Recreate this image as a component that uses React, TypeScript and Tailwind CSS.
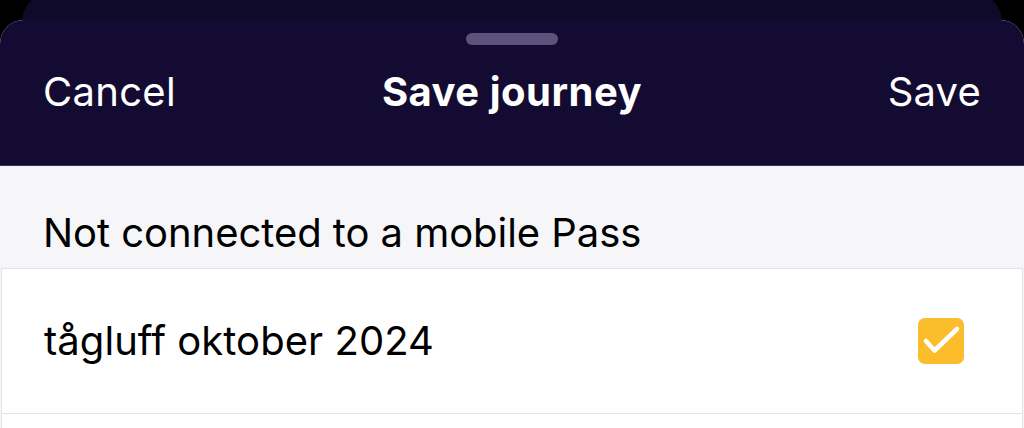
export default function App() {
  return (
    <div className="flex h-[428px] w-[1024px] flex-col overflow-hidden bg-black font-['Inter',sans-serif] antialiased">
      {/* stacked sheet behind */}
      <div className="mx-[22px] -mt-[8px] h-[52px] shrink-0 rounded-t-[30px] bg-[#0f0a29]" />

      {/* front sheet */}
      <div className="-mt-[24px] flex flex-1 flex-col overflow-hidden rounded-t-[24px] bg-[#f6f6f8]">
        <header className="flex h-[146px] shrink-0 flex-col items-center border-b border-[#3a3157] bg-[#140b33] text-white">
          <div className="mt-[13px] h-[12px] w-[92px] rounded-full bg-[#5d527c]" />
          <div className="mt-[12px] grid h-[70px] w-full grid-cols-[1fr_auto_1fr] items-center px-[43px] text-[40px]">
            <button className="justify-self-start font-normal tracking-[0.3px]">Cancel</button>
            <h1 className="font-bold tracking-[0.5px]">Save journey</h1>
            <button className="justify-self-end font-normal tracking-[0.2px]">Save</button>
          </div>
        </header>

        <div className="flex h-[102px] shrink-0 items-center px-[43px] pt-[32px] text-[40px] tracking-[-0.05px] text-black">
          Not connected to a mobile Pass
        </div>

        <ul className="mx-[1px] flex-1 border-x border-t border-[#e3e3e8] bg-white">
          <li className="flex h-[145px] items-center justify-between border-b border-[#e3e3e8] pl-[42px] pr-[58px] text-[40px] tracking-[0.05px] text-black">
            <span>tågluff oktober 2024</span>
            <span className="flex h-[46px] w-[46px] items-center justify-center rounded-[7px] bg-[#fbbd2c]">
              <svg viewBox="0 0 46 46" className="h-[46px] w-[46px]" fill="none" stroke="white" strokeWidth="4.5" strokeLinecap="round" strokeLinejoin="round">
                <path d="M8 23l8.5 9.5L39 11" />
              </svg>
            </span>
          </li>
          <li className="h-[60px]" />
        </ul>
      </div>
    </div>
  );
}
